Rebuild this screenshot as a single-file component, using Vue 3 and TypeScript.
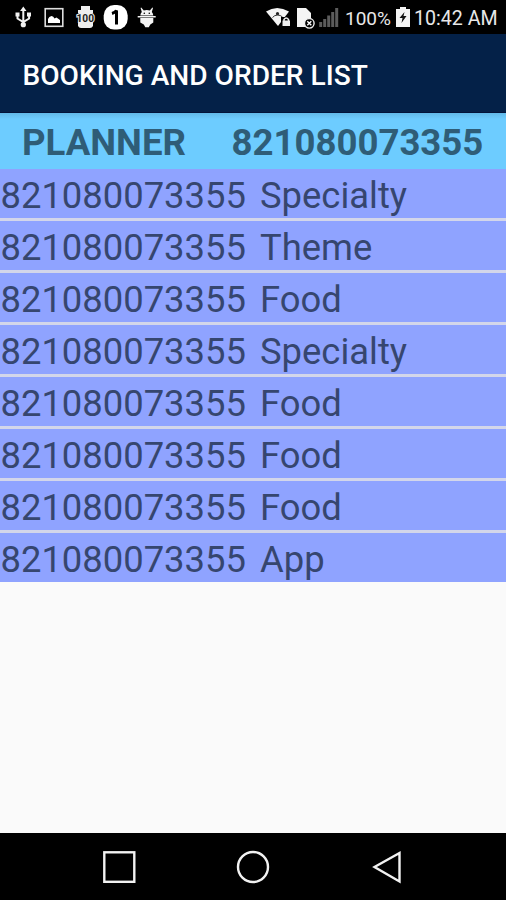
<script setup lang="ts">
interface Order {
  phone: string
  category: string
}

const phone = '821080073355'
const orders: Order[] = [
  'Specialty', 'Theme', 'Food', 'Specialty', 'Food', 'Food', 'Food', 'App',
].map((category) => ({ phone, category }))
</script>

<template>
  <div class="screen">
    <div class="status">
      <svg class="notices" viewBox="0 0 170 34" width="170" height="34">
        <path d="M23.300 10v14M17.500 14v4.500l5.800 3.500 5.800-3.500V14" fill="none" stroke="#f2f2f2" stroke-width="2" />
        <path d="M23.300 6.500l3.200 4.500h-6.400zM15.500 12.500h4v4h-4zM27 12.500h4v4h-4z" fill="#f2f2f2" />
        <circle cx="23.300" cy="24.700" r="2.600" fill="#f2f2f2" />
        <rect x="45.200" y="8.700" width="17.600" height="17.600" fill="none" stroke="#ddd" stroke-width="1.600" />
        <path d="M48 23v-4q1-2.500 3.500-3 2 0 3 2.500l2-1 3.500 2.500v3z" fill="#fff" />
        <path d="M81 6h9v4h3v3.500h-1.500v8H93v4.500q-1 2-3 2h-9q-2 0-3-2v-4.500h1v-8h-1V10h3z" fill="#eee" />
        <text x="76.500" y="21.500" textLength="17.500" lengthAdjust="spacingAndGlyphs" class="badge">100</text>
        <rect x="103.700" y="5" width="24" height="24.500" rx="10.500" fill="#fff" />
        <path d="M112 13.500q3.500-1 4.500-3v14" fill="none" stroke="#000" stroke-width="3" />
        <path d="M141.200 7.500l2.600 3q3-1 6 0l2.600-3 .6.500-1.200 4q1.300 1.200 1.500 3.500h-13q.2-2.300 1.500-3.500l-1.200-4zM137.700 16h18v1.500h-18zM140.300 18h13v4.500l-3 2-1.500 2.800h-3.500l-1.500-2.800-3.500-2z" fill="#f4f4f4" />
        <circle cx="144.300" cy="13.200" r=".8" />
        <circle cx="149.300" cy="13.200" r=".8" />
      </svg>
      <svg class="network" viewBox="0 0 75 34" width="75" height="34">
        <path d="M1 11.500q11-7 23 0L13 26z" fill="#f4f4f4" />
        <circle cx="12.500" cy="13.700" r="1.600" fill="#222" />
        <path d="M7.500 17.500q2-2.500 5-2.500t5 2" fill="none" stroke="#333" />
        <path d="M16 17h10v10H16z" fill="#000" />
        <path d="M17.500 20.500H25V26h-7.500z" fill="#eee" />
        <path d="M19 21v-1.500q2.200-3 4.500 0V21" fill="none" stroke="#eee" stroke-width="1.500" />
        <path d="M32 8h9l5 5v14H32z" fill="#f4f4f4" />
        <circle cx="44.300" cy="23.300" r="4.800" fill="#000" stroke="#eee" stroke-width="1.400" />
        <path d="M42.300 21.300l4 4m0-4l-4 4" stroke="#fff" stroke-width="1.400" />
        <path d="M54.200 22h3v5h-3zM58.200 19h3v8h-3zM62.200 15.500h3V27h-3zM66.200 12h3v15h-3zM70.200 8h3v19h-3z" fill="#5c5c5c" />
      </svg>
      <span class="percent">100%</span>
      <svg class="battery" viewBox="0 0 14 22" width="14" height="22">
        <path d="M4 0h6v2h4v18H0V2h4z" fill="#f4f4f4" />
        <path d="M8.500 5L3.500 11h3l-1 5 5-7h-3z" fill="#111" />
      </svg>
      <span class="clock">10:42 AM</span>
    </div>
    <header class="appbar"><h1>BOOKING AND ORDER LIST</h1></header>
    <div class="heading">
      <span class="planner">PLANNER</span>
      <span>{{ phone }}</span>
    </div>
    <ul class="orders">
      <li v-for="(order, i) in orders" :key="i">
        <span class="phone">{{ order.phone }}</span>
        <span>{{ order.category }}</span>
      </li>
    </ul>
    <nav class="nav">
      <svg viewBox="0 0 506 67" width="506" height="67" fill="none" stroke="#f2f2f2" stroke-width="2.400">
        <rect x="104.300" y="19.300" width="30" height="29.500" />
        <circle cx="253" cy="34" r="15" />
        <path d="M399.500 20v28.500L374.500 34z" />
      </svg>
    </nav>
  </div>
</template>

<style>
body {
  margin: 0;
  background: #fafafa;
}
</style>

<style scoped>
.screen {
  width: 506px;
  height: 900px;
  display: flex;
  flex-direction: column;
  overflow: hidden;
  background: #fafafa;
  font-family: Roboto, sans-serif;
}
.status {
  height: 34px;
  flex: none;
  display: flex;
  align-items: center;
  background: #000;
  color: #e8e8e8;
  font-size: 19.6px;
  white-space: nowrap;
}
.network {
  margin-left: 95px;
}
.badge {
  font: bold 10px Roboto, sans-serif;
  fill: #222;
  stroke: #eee;
  stroke-width: 2px;
  paint-order: stroke;
}
.percent {
  width: 51px;
  margin-left: 5px;
  margin-top: 2px;
  font-size: 19px;
}
.battery {
  margin-top: 2px;
}
.clock {
  margin-left: 4px;
  margin-top: 2px;
}
.appbar {
  height: 79px;
  flex: none;
  box-sizing: border-box;
  display: flex;
  align-items: center;
  padding: 4px 0 0 22.5px;
  background: #042148;
  border-bottom: 1px solid #03143a;
}
h1 {
  margin: 0;
  color: #fff;
  font-size: 28.1px;
  font-weight: 500;
  white-space: nowrap;
}
.heading {
  height: 56px;
  flex: none;
  box-sizing: border-box;
  display: flex;
  align-items: center;
  padding: 3px 0 0 22px;
  background: linear-gradient(#62b9e8, #6dccff 6px);
  color: #2f5d77;
  font-size: 36.6px;
  font-weight: 700;
  white-space: nowrap;
}
.planner {
  width: 209.5px;
}
.orders {
  flex: 1;
  margin: 0;
  padding: 0;
  list-style: none;
}
.orders li {
  height: 49px;
  display: flex;
  align-items: center;
  box-sizing: border-box;
  padding: 4px 0 0 0.5px;
  background: #8fa3ff;
  color: #36466f;
  font-size: 36.4px;
  white-space: nowrap;
}
.orders li + li {
  margin-top: 3px;
  box-shadow: 0 -3px #d3d6ea;
}
.phone {
  width: 259.5px;
}
.nav {
  height: 67px;
  flex: none;
  background: #000;
}
.nav svg {
  display: block;
}
</style>
